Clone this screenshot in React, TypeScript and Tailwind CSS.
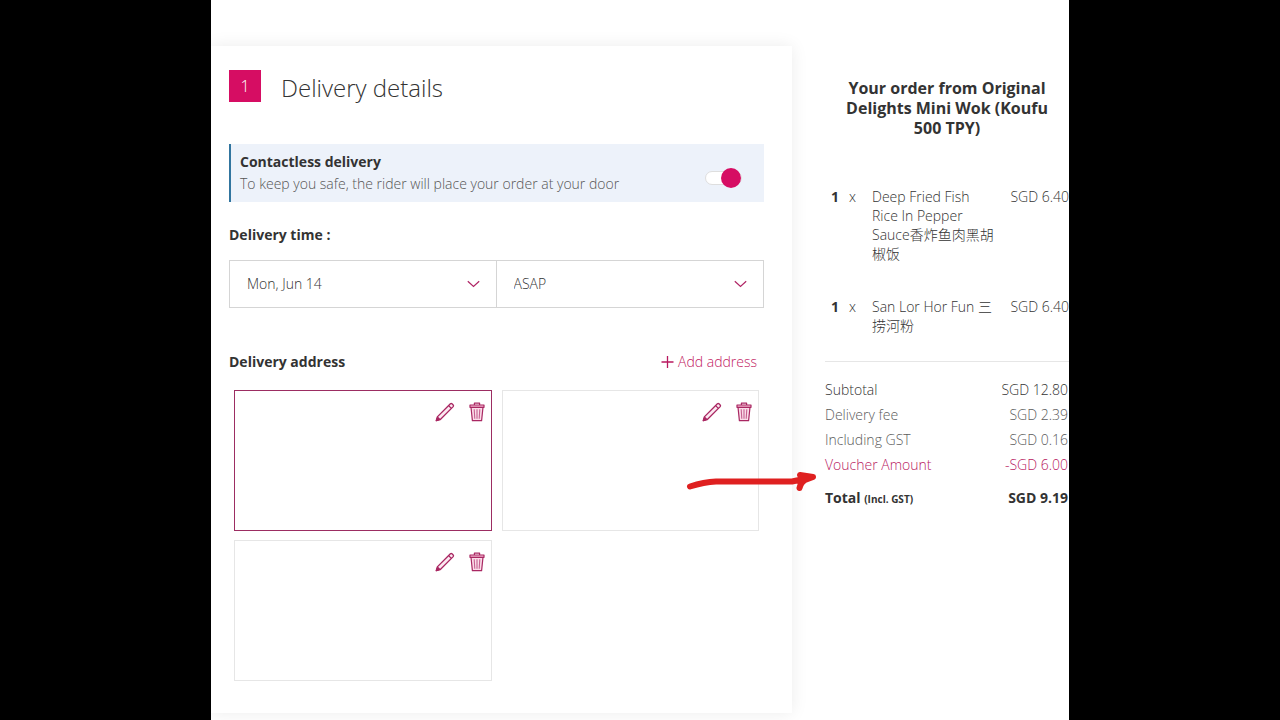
import { useState } from "react";

type OrderItem = { quantity: number; name: string; price: string };

const items: OrderItem[] = [
  { quantity: 1, name: "Deep Fried Fish Rice In Pepper Sauce香炸鱼肉黑胡椒饭", price: "SGD 6.40" },
  { quantity: 1, name: "San Lor Hor Fun 三捞河粉", price: "SGD 6.40" },
];

const totals = [
  { label: "Subtotal", amount: "SGD 12.80", tone: "text-[#333333]" },
  { label: "Delivery fee", amount: "SGD 2.39", tone: "text-[#5c5c5c]" },
  { label: "Including GST", amount: "SGD 0.16", tone: "text-[#5c5c5c]" },
  { label: "Voucher Amount", amount: "-SGD 6.00", tone: "text-[#b8195f]" },
];

function ChevronIcon() {
  return (
    <svg className="pointer-events-none col-start-1 row-start-1 mr-4 self-center justify-self-end" width="13" height="8" viewBox="0 0 13 8" fill="none" stroke="#b02565" strokeWidth="1.2" aria-hidden="true">
      <path d="M0.8 1.2 6.5 6.5 12.2 1.2" />
    </svg>
  );
}

function PencilIcon() {
  return (
    <svg width="20" height="20" viewBox="0 0 20 20" fill="none" stroke="#a92762" strokeWidth="1.3" strokeLinejoin="round" aria-hidden="true">
      <path fill="#fbe6ef" d="M1.3 18.7 2.3 14.9 15.4 1.8Q16.2 1.1 17 1.8L18.2 3Q18.9 3.8 18.2 4.6L5.1 17.7Z" />
      <path d="M2.3 14.9 5.1 17.7M13.6 3.6 16.4 6.4M1.3 18.7 2 16.4 3.6 18Z" />
    </svg>
  );
}

function TrashIcon() {
  return (
    <svg width="16" height="20" viewBox="0 0 16 20" fill="none" stroke="#a92762" strokeWidth="1.2" strokeLinejoin="round" aria-hidden="true">
      <path fill="#fbdbe8" d="M2 5.3 3.4 18.6H12.6L14 5.3Z" />
      <path fill="#f0b0ca" d="M1 3H15V5.3H1Z" />
      <path d="M5.4 3V1.2H10.6V3" />
      <path stroke="#c4608f" strokeWidth="1.1" d="M5.2 7.2 5.8 16.8M8 7.2V16.8M10.8 7.2 10.2 16.8" />
    </svg>
  );
}

function TimeSelect({ label, value, className }: { label: string; value: string; className: string }) {
  return (
    <div className={`grid ${className}`}>
      <select aria-label={label} className="col-start-1 row-start-1 h-[46px] w-full appearance-none bg-white pl-[17px] pr-10 text-sm font-light text-[#333333]">
        <option>{value}</option>
      </select>
      <ChevronIcon />
    </div>
  );
}

function AddressCard({ selected, index }: { selected: boolean; index: number }) {
  return (
    <li className={`flex min-h-[141px] items-start justify-end gap-3.5 border pr-1.5 pt-[11px] ${selected ? "border-[#9c2d62]" : "border-[#e6e6e6]"}`}>
      <button type="button" aria-label={`Edit address ${index}`}>
        <PencilIcon />
      </button>
      <button type="button" aria-label={`Delete address ${index}`}>
        <TrashIcon />
      </button>
    </li>
  );
}

export default function App() {
  const [contactless, setContactless] = useState(true);

  return (
    <div className="min-h-screen bg-black font-['Open_Sans','Noto_Sans_CJK_SC',sans-serif] text-sm text-[#333333]">
      <div className="relative mx-auto flex min-h-screen max-w-[858px] items-start overflow-hidden bg-white pb-[7px] pt-[46px]">
        <main className="flex-1 bg-white pb-8 pl-[18px] pr-7 pt-6 shadow-[0_0_16px_rgba(0,0,0,0.08)]">
          <header className="flex items-start gap-5">
            <span className="flex size-8 items-center justify-center bg-[#d60d63] text-base font-light text-white">1</span>
            <h1 className="pt-0.5 text-2xl font-light leading-8">Delivery details</h1>
          </header>

          <div className="mt-10 flex items-center justify-between border-l-2 border-[#31759f] bg-[#edf2fa] py-[7px] pl-[9px] pr-[22px]">
            <label htmlFor="contactless" className="leading-[22px]">
              <strong className="block font-bold">Contactless delivery</strong>
              <span className="block font-light text-[#555555]">To keep you safe, the rider will place your order at your door</span>
            </label>
            <input
              id="contactless"
              type="checkbox"
              role="switch"
              checked={contactless}
              onChange={(event) => setContactless(event.target.checked)}
              className="mt-2.5 flex h-3.5 w-[37px] appearance-none items-center rounded-full border border-[#dedede] bg-white before:size-5 before:shrink-0 before:rounded-full before:bg-[#999999] checked:justify-end checked:before:bg-[#d60d63]"
            />
          </div>

          <h2 className="mt-[23px] font-bold leading-5">Delivery time :</h2>
          <div className="mt-[15px] grid grid-cols-2 border border-[#d5d5d5]">
            <TimeSelect label="Delivery date" value="Mon, Jun 14" className="border-r border-[#d5d5d5]" />
            <TimeSelect label="Delivery hour" value="ASAP" className="" />
          </div>

          <div className="mt-11 flex items-center justify-between pr-[7px] leading-5">
            <h2 className="font-bold">Delivery address</h2>
            <a href="#add-address" className="flex items-center gap-1 font-light text-[#c2185f]">
              <svg width="13" height="12" viewBox="0 0 13 12" stroke="#b8195f" strokeWidth="1.3" aria-hidden="true">
                <path d="M0.5 6H12.5M6.5 0V12" />
              </svg>
              Add address
            </a>
          </div>
          <ul className="mt-[18px] grid grid-cols-2 gap-x-2.5 gap-y-[9px] px-[5px]">
            <AddressCard index={1} selected />
            <AddressCard index={2} selected={false} />
            <AddressCard index={3} selected={false} />
          </ul>
        </main>

        <aside className="w-[277px] shrink-0 pl-[33px] pt-8">
          <h2 className="px-5 text-center text-base font-bold leading-5">
            Your order from Original Delights Mini Wok (Koufu 500 TPY)
          </h2>
          <ul className="mt-[49px] flex flex-col gap-[34px] border-b border-[#e6e6e6] pb-[26px] font-light leading-[19px]">
            {items.map((item) => (
              <li key={item.name} className="flex whitespace-nowrap pl-1.5">
                <span className="w-[18px] font-bold">{item.quantity}</span>
                <span className="w-[23px]">x</span>
                <span className="w-[126px] whitespace-normal">{item.name}</span>
                <span className="ml-auto">{item.price}</span>
              </li>
            ))}
          </ul>
          <dl className="mt-[15px] pr-px font-light leading-[25px]">
            {totals.map((row) => (
              <div key={row.label} className={`flex justify-between ${row.tone}`}>
                <dt>{row.label}</dt>
                <dd>{row.amount}</dd>
              </div>
            ))}
            <div className="mt-2 flex justify-between font-bold">
              <dt>
                Total <span className="text-[10px]">(Incl. GST)</span>
              </dt>
              <dd>SGD 9.19</dd>
            </div>
          </dl>
        </aside>

        <svg className="pointer-events-none absolute left-[474px] top-[468px]" width="136" height="26" viewBox="0 0 136 26" fill="none" stroke="#df2020" strokeWidth="6" strokeLinecap="round" strokeLinejoin="round" aria-hidden="true">
          <path d="M5 18.5Q19 14 31 13.5H107Q118 11.5 127 9M115 7 128 9 120 12Q116 14 114.500 20" />
        </svg>
      </div>
    </div>
  );
}
